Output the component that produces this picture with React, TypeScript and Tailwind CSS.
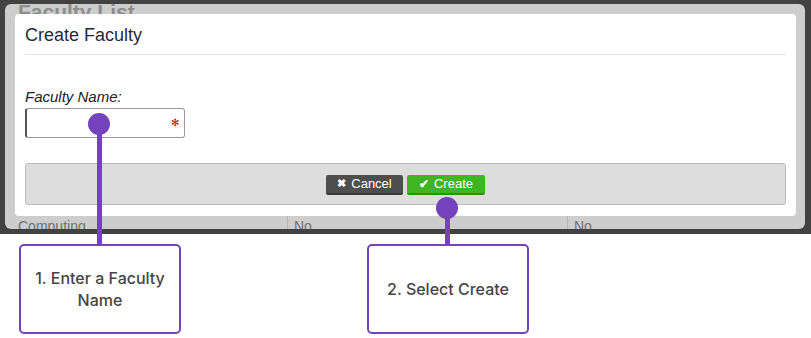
import React from 'react';

const PURPLE = 'bg-[#7542bd]';

const Marker: React.FC<{ height: string }> = ({ height }) => (
  <div className="flex flex-col items-center">
    <div className={`w-[22px] h-[22px] rounded-full ${PURPLE}`} />
    <div className={`w-[5px] -mt-[2px] ${PURPLE} ${height}`} />
  </div>
);

const Callout: React.FC<{ children: React.ReactNode }> = ({ children }) => (
  <div className="w-[162px] h-[90px] border-2 border-[#7542bd] rounded-[5px] bg-white flex items-center justify-center text-center text-[16px] leading-[22px] font-medium text-[#454545] px-2">
    {children}
  </div>
);

const App: React.FC = () => {
  return (
    <div className="w-[811px] h-[338px] bg-white relative overflow-hidden" style={{ fontFamily: '"Liberation Sans", Arial, sans-serif' }}>
      {/* screenshot of the page behind the dialog */}
      <div className="relative h-[234px] bg-[#424242]">
        <div className="absolute left-[5px] top-[4px] right-[6px] bottom-[5px] bg-[#cdcdcd] rounded-[6px] overflow-hidden">
          <div className="absolute left-[13px] -top-[4px] text-[21px] font-bold leading-[24px] text-[#8e8e8e]">Faculty List</div>
          <div className="absolute left-[13px] top-[64px] text-[18px] text-[#b9b9b9]">F</div>
          <div className="absolute left-0 right-0 top-[212px] h-[20px] flex text-[14px] leading-[20px] text-[#707070]">
            <div className="w-[282px] pl-[13px]">Computing</div>
            <div className="w-[280px] pl-[6px] border-l border-[#b5b5b5]">No</div>
            <div className="flex-1 pl-[6px] border-l border-[#b5b5b5]">No</div>
          </div>

          {/* dialog */}
          <div className="absolute left-[10px] top-[10px] right-[9px] h-[202px] bg-white rounded-[4px] px-[10px] flex flex-col">
            <div className="h-[41px] flex items-center border-b border-[#e3e3e3] text-[18px] text-[#1f2b3a] pt-[2px]">
              Create Faculty
            </div>
            <div className="mt-[33px] text-[15px] italic text-[#222] leading-[17px]">Faculty Name:</div>
            <div className="mt-[3px] w-[160px] h-[30px] border border-[#999] border-l-2 border-l-[#555] rounded-[3px] flex items-center justify-end pr-[5px]">
              <span className="text-[#d40000] text-[10px] leading-none">✻</span>
            </div>
            <div className="mt-[25px] h-[42px] bg-[#dddddd] border border-[#bbbbbb] rounded-[3px] flex items-center justify-center gap-[4px] pt-[1px]">
              <button className="w-[77px] h-[20px] bg-[#4e4e4e] border-b-2 border-[#3a3a3a] rounded-[2px] text-white text-[13px] flex items-center justify-center gap-[5px]">
                <span className="text-[11px] font-bold">✖</span>Cancel
              </button>
              <button className="w-[78px] h-[20px] bg-[#3eb521] border-b-2 border-[#2e8f18] rounded-[2px] text-white text-[13px] flex items-center justify-center gap-[5px]">
                <span className="text-[12px] font-bold">✔</span>Create
              </button>
            </div>
          </div>
        </div>
      </div>

      {/* callout markers */}
      <div className="absolute left-[88px] top-[113px]">
        <Marker height="h-[111px]" />
      </div>
      <div className="absolute left-[436px] top-[197px]">
        <Marker height="h-[27px]" />
      </div>

      {/* callout boxes */}
      <div className="flex pt-[10px]">
        <div className="ml-[19px]">
          <Callout>
            <span style={{ fontFamily: 'Inter, sans-serif' }}>1. Enter a Faculty Name</span>
          </Callout>
        </div>
        <div className="ml-[186px]">
          <Callout>
            <span style={{ fontFamily: 'Inter, sans-serif' }}>2. Select Create</span>
          </Callout>
        </div>
      </div>
    </div>
  );
};

export default App;
